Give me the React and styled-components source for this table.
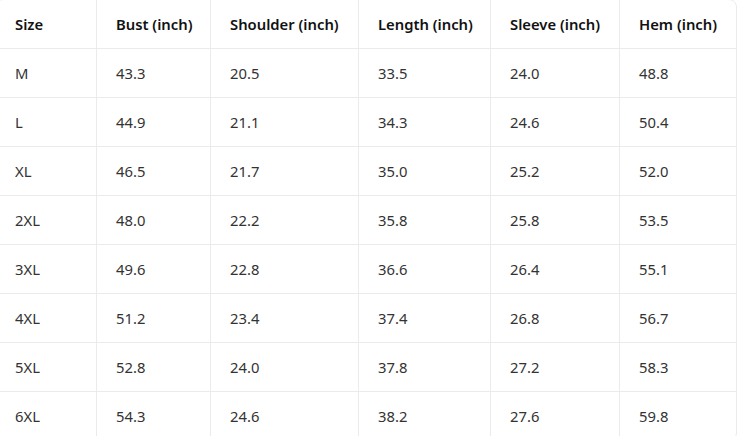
import React from 'react';
import styled, { createGlobalStyle } from 'styled-components';

const GlobalStyle = createGlobalStyle`
  body {
    margin: 0;
    background: #fff;
    font-family: "Noto Sans", "Open Sans", sans-serif;
  }
`;

const Wrap = styled.div`
  width: 740px;
  margin: -1px 0 0 -5px;
  border: 1px solid #ebebeb;
  border-radius: 8px;
  overflow: hidden;
`;

const Table = styled.table`
  width: 740px;
  table-layout: fixed;
  border-collapse: separate;
  border-spacing: 0;
  font-size: 14.8px;
`;

const Cell = styled.td`
  height: 48px;
  padding: 0 0 0 19px;
  box-sizing: content-box;
  border-bottom: ${p => (p.$last ? 'none' : '1px solid #ebebeb')};
  border-right: 1px solid #ebebeb;
  color: #333;
  text-align: left;
  white-space: nowrap;
  vertical-align: middle;

  &:last-child {
    border-right: none;
  }
`;

const Head = styled(Cell).attrs({ as: 'th' })`
  color: #111;
  font-weight: 600;
`;

const widths = [101, 114, 148, 132, 129, 116];

const headers = ['Size', 'Bust (inch)', 'Shoulder (inch)', 'Length (inch)', 'Sleeve (inch)', 'Hem (inch)'];

const rows = [
  ['M', '43.3', '20.5', '33.5', '24.0', '48.8'],
  ['L', '44.9', '21.1', '34.3', '24.6', '50.4'],
  ['XL', '46.5', '21.7', '35.0', '25.2', '52.0'],
  ['2XL', '48.0', '22.2', '35.8', '25.8', '53.5'],
  ['3XL', '49.6', '22.8', '36.6', '26.4', '55.1'],
  ['4XL', '51.2', '23.4', '37.4', '26.8', '56.7'],
  ['5XL', '52.8', '24.0', '37.8', '27.2', '58.3'],
  ['6XL', '54.3', '24.6', '38.2', '27.6', '59.8'],
];

export default function App() {
  return (
    <>
      <GlobalStyle />
      <Wrap>
        <Table>
          <colgroup>
            {widths.map((w, i) => (
              <col key={i} style={{ width: w }} />
            ))}
          </colgroup>
          <thead>
            <tr>
              {headers.map(h => (
                <Head key={h}>{h}</Head>
              ))}
            </tr>
          </thead>
          <tbody>
            {rows.map((r, i) => (
              <tr key={r[0]}>
                {r.map((v, j) => (
                  <Cell key={j} $last={i === rows.length - 1}>{v}</Cell>
                ))}
              </tr>
            ))}
          </tbody>
        </Table>
      </Wrap>
    </>
  );
}
